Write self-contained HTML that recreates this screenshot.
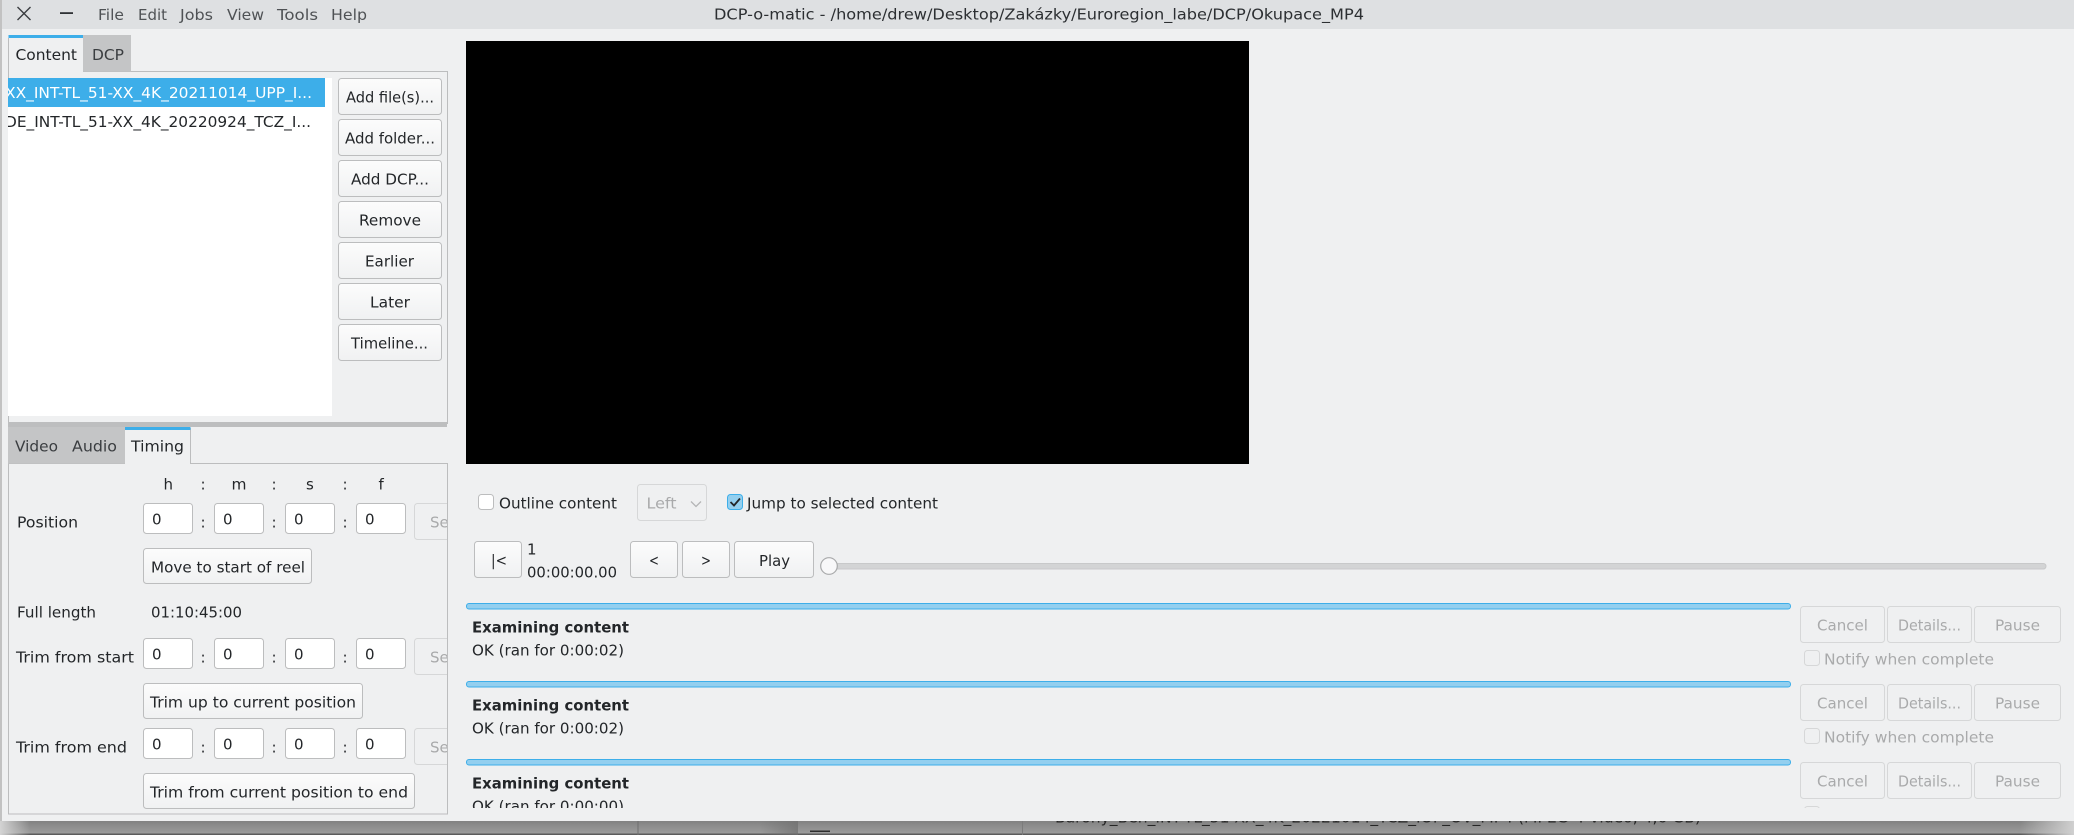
<!DOCTYPE html>
<html><head><meta charset="utf-8"><title>DCP-o-matic</title>
<style>
html,body{margin:0;padding:0;background:#999;width:2074px;height:835px;overflow:hidden}
svg{display:block}
text{font-family:"DejaVu Sans",sans-serif;font-size:15px;fill:#232629}
.d{fill:#a9aaab}
.m{fill:#4f5255}
.b{font-weight:bold;font-size:14.8px}
.btn{fill:url(#g);stroke:#bcbdbe}
.dis{fill:#eff0f1;stroke:#d6d7d8}
.in{fill:#fff;stroke:#bcbdbe}
.bar{fill:#93cfef;stroke:#3daee9;stroke-width:1}
</style></head><body>
<svg xmlns="http://www.w3.org/2000/svg" width="2074" height="835" viewBox="0 0 2074 835">
<defs>
<linearGradient id="g" x1="0" y1="0" x2="0" y2="1"><stop offset="0" stop-color="#fcfcfc"/><stop offset="1" stop-color="#f0f1f2"/></linearGradient>
<linearGradient id="sh" x1="0" y1="0" x2="0" y2="1"><stop offset="0" stop-color="#828282"/><stop offset="1" stop-color="#9d9d9d"/></linearGradient>
<linearGradient id="l" x1="0" y1="0" x2="1" y2="0"><stop offset="0" stop-color="#d4d4d4"/><stop offset="1" stop-color="#d4d4d4" stop-opacity="0"/></linearGradient>
<linearGradient id="r" x1="0" y1="0" x2="1" y2="0"><stop offset="0" stop-color="#d0d0d0" stop-opacity="0"/><stop offset="1" stop-color="#d0d0d0"/></linearGradient>
<linearGradient id="k" x1="0" y1="0" x2="1" y2="0"><stop offset="0" stop-color="#6e6e6e" stop-opacity="0"/><stop offset="1" stop-color="#6e6e6e"/></linearGradient>
<clipPath id="cl"><rect x="8" y="78" width="317" height="60"/></clipPath>
<clipPath id="cb"><rect x="460" y="0" width="1620" height="808"/></clipPath>
<clipPath id="cb2"><rect x="0" y="821" width="2074" height="14"/></clipPath>
<clipPath id="cs"><rect x="0" y="0" width="447" height="835"/></clipPath>
</defs>

<!-- background behind window -->
<rect x="0" y="0" width="2074" height="835" fill="#c2c2c2"/>
<rect x="0" y="821" width="2074" height="12.5" fill="url(#sh)"/>
<rect x="0" y="833.5" width="2074" height="1.5" fill="#5c5c5c"/>
<rect x="0" y="821" width="30" height="14" fill="url(#l)"/>
<rect x="2020" y="821" width="54" height="14" fill="url(#r)"/>
<rect x="760" y="821" width="38" height="14" fill="url(#k)" opacity=".7"/>
<rect x="637.5" y="821" width="1" height="14" fill="#6f6f6f"/>
<rect x="1022" y="821" width="1" height="14" fill="#7c7c7c"/>
<rect x="810" y="830.5" width="20" height="1.5" fill="#2e2e2e"/>
<g clip-path="url(#cb2)"><text x="1055" y="822.5" textLength="646" lengthAdjust="spacingAndGlyphs" style="fill:#262626">Barony_Ben_INT-TL_51-XX_4K_20221014_TCZ_IOP_OV_MP4 (MPEG-4 Video, 4,6 GB)</text></g>

<!-- window -->
<rect x="2" y="0" width="2072" height="821" fill="#eff0f1"/>
<rect x="2" y="0" width="2072" height="29" fill="#dee0e2"/>

<!-- titlebar icons -->
<path d="M17.5 7L30.5 20M30.5 7L17.5 20" stroke="#3a3d40" stroke-width="1.4" fill="none"/>
<rect x="60" y="12.2" width="13" height="1.8" fill="#2f3235"/>

<!-- menu -->
<text class="m" x="98" y="20" textLength="26" lengthAdjust="spacingAndGlyphs">File</text>
<text class="m" x="138" y="20" textLength="29" lengthAdjust="spacingAndGlyphs">Edit</text>
<text class="m" x="180" y="20" textLength="33" lengthAdjust="spacingAndGlyphs">Jobs</text>
<text class="m" x="227" y="20" textLength="37" lengthAdjust="spacingAndGlyphs">View</text>
<text class="m" x="277" y="20" textLength="41" lengthAdjust="spacingAndGlyphs">Tools</text>
<text class="m" x="331" y="20" textLength="36" lengthAdjust="spacingAndGlyphs">Help</text>
<text x="714" y="19.5" textLength="650" lengthAdjust="spacingAndGlyphs" style="fill:#2c2f32">DCP-o-matic - /home/drew/Desktop/Zakázky/Euroregion_labe/DCP/Okupace_MP4</text>

<!-- top notebook -->
<rect x="8.5" y="71.5" width="439" height="352" fill="none" stroke="#bcbdbe"/>
<rect x="83" y="35" width="48" height="36.5" fill="#c4c5c6"/>
<rect x="8.5" y="35.5" width="74.5" height="38" fill="#eff0f1"/>
<rect x="8.5" y="35" width="74.5" height="3" fill="#3daee9"/>
<rect x="8" y="38" width="1" height="36" fill="#bcbdbe"/>
<text x="15.5" y="60" textLength="61.5" lengthAdjust="spacingAndGlyphs">Content</text>
<text x="92" y="60" textLength="32" lengthAdjust="spacingAndGlyphs" style="fill:#3a3d40">DCP</text>

<!-- list -->
<rect x="8" y="78" width="324" height="338" fill="#fff"/>
<rect x="8" y="78" width="317" height="29" fill="#3daee9"/>
<g clip-path="url(#cl)">
<text x="5" y="98" textLength="307" lengthAdjust="spacingAndGlyphs" style="fill:#fff">XX_INT-TL_51-XX_4K_20211014_UPP_I...</text>
<text x="5" y="127" textLength="306" lengthAdjust="spacingAndGlyphs">DE_INT-TL_51-XX_4K_20220924_TCZ_I...</text>
</g>

<!-- side buttons -->
<rect class="btn" x="338.5" y="78.5" width="103" height="36" rx="3"/>
<rect class="btn" x="338.5" y="119.5" width="103" height="36" rx="3"/>
<rect class="btn" x="338.5" y="160.5" width="103" height="36" rx="3"/>
<rect class="btn" x="338.5" y="201.5" width="103" height="36" rx="3"/>
<rect class="btn" x="338.5" y="242.5" width="103" height="36" rx="3"/>
<rect class="btn" x="338.5" y="283.5" width="103" height="36" rx="3"/>
<rect class="btn" x="338.5" y="324.5" width="103" height="36" rx="3"/>
<text x="346" y="102.5" textLength="88" lengthAdjust="spacingAndGlyphs">Add file(s)...</text>
<text x="345" y="143.5" textLength="90" lengthAdjust="spacingAndGlyphs">Add folder...</text>
<text x="351" y="184.5" textLength="78" lengthAdjust="spacingAndGlyphs">Add DCP...</text>
<text x="359" y="225.5" textLength="62" lengthAdjust="spacingAndGlyphs">Remove</text>
<text x="365" y="266.5" textLength="49" lengthAdjust="spacingAndGlyphs">Earlier</text>
<text x="370" y="307.5" textLength="40" lengthAdjust="spacingAndGlyphs">Later</text>
<text x="351" y="348.5" textLength="77" lengthAdjust="spacingAndGlyphs">Timeline...</text>

<!-- sash -->
<rect x="8" y="422" width="439" height="5" fill="#bdbebf"/>

<!-- lower notebook -->
<rect x="8.5" y="463.5" width="439" height="350.5" fill="none" stroke="#bcbdbe"/>
<rect x="8" y="427" width="117" height="36.5" fill="#c4c5c6"/>
<rect x="125" y="427" width="65" height="38" fill="#eff0f1"/>
<rect x="190" y="428" width="1" height="36" fill="#bcbdbe"/>
<rect x="125" y="427" width="65.5" height="3" fill="#3daee9"/>
<text x="15" y="451.5" textLength="43" lengthAdjust="spacingAndGlyphs" style="fill:#3a3d40">Video</text>
<text x="72" y="451.5" textLength="45" lengthAdjust="spacingAndGlyphs" style="fill:#3a3d40">Audio</text>
<text x="131" y="451.5" textLength="53" lengthAdjust="spacingAndGlyphs">Timing</text>

<text x="163.5" y="489.5">h</text><text x="200.5" y="489.5">:</text>
<text x="231.5" y="489.5" textLength="15" lengthAdjust="spacingAndGlyphs">m</text><text x="271.5" y="489.5">:</text>
<text x="306" y="489.5">s</text><text x="342.5" y="489.5">:</text>
<text x="378.5" y="489.5">f</text>

<g clip-path="url(#cs)">
<text x="17" y="527.5" textLength="61" lengthAdjust="spacingAndGlyphs">Position</text>
<rect class="in" x="143.5" y="503.5" width="49" height="30" rx="3"/>
<rect class="in" x="214.5" y="503.5" width="49" height="30" rx="3"/>
<rect class="in" x="285.5" y="503.5" width="49" height="30" rx="3"/>
<rect class="in" x="356.5" y="503.5" width="49" height="30" rx="3"/>
<text x="152" y="524.5">0</text><text x="223" y="524.5">0</text><text x="294" y="524.5">0</text><text x="365" y="524.5">0</text>
<text x="200.5" y="527.5">:</text><text x="271.5" y="527.5">:</text><text x="342.5" y="527.5">:</text>
<rect class="dis" x="414.5" y="503.5" width="60" height="36" rx="3"/>
<text class="d" x="430" y="527.5">Se</text>
<rect class="btn" x="143.5" y="548.5" width="168" height="35" rx="3"/>
<text x="151" y="572.5" textLength="154" lengthAdjust="spacingAndGlyphs">Move to start of reel</text>

<text x="17" y="617.5" textLength="79" lengthAdjust="spacingAndGlyphs">Full length</text>
<text x="151" y="617.5" textLength="91" lengthAdjust="spacingAndGlyphs">01:10:45:00</text>

<text x="16" y="662.5" textLength="118" lengthAdjust="spacingAndGlyphs">Trim from start</text>
<rect class="in" x="143.5" y="638.5" width="49" height="30" rx="3"/>
<rect class="in" x="214.5" y="638.5" width="49" height="30" rx="3"/>
<rect class="in" x="285.5" y="638.5" width="49" height="30" rx="3"/>
<rect class="in" x="356.5" y="638.5" width="49" height="30" rx="3"/>
<text x="152" y="659.5">0</text><text x="223" y="659.5">0</text><text x="294" y="659.5">0</text><text x="365" y="659.5">0</text>
<text x="200.5" y="662.5">:</text><text x="271.5" y="662.5">:</text><text x="342.5" y="662.5">:</text>
<rect class="dis" x="414.5" y="638.5" width="60" height="36" rx="3"/>
<text class="d" x="430" y="662.5">Se</text>
<rect class="btn" x="143.5" y="683.5" width="219" height="35" rx="3"/>
<text x="150" y="707.5" textLength="206" lengthAdjust="spacingAndGlyphs">Trim up to current position</text>

<text x="16" y="752.5" textLength="111" lengthAdjust="spacingAndGlyphs">Trim from end</text>
<rect class="in" x="143.5" y="728.5" width="49" height="30" rx="3"/>
<rect class="in" x="214.5" y="728.5" width="49" height="30" rx="3"/>
<rect class="in" x="285.5" y="728.5" width="49" height="30" rx="3"/>
<rect class="in" x="356.5" y="728.5" width="49" height="30" rx="3"/>
<text x="152" y="749.5">0</text><text x="223" y="749.5">0</text><text x="294" y="749.5">0</text><text x="365" y="749.5">0</text>
<text x="200.5" y="752.5">:</text><text x="271.5" y="752.5">:</text><text x="342.5" y="752.5">:</text>
<rect class="dis" x="414.5" y="728.5" width="60" height="36" rx="3"/>
<text class="d" x="430" y="752.5">Se</text>
<rect class="btn" x="143.5" y="773.5" width="271" height="35" rx="3"/>
<text x="150" y="797.5" textLength="258" lengthAdjust="spacingAndGlyphs">Trim from current position to end</text>
</g>

<!-- viewer -->
<rect x="466" y="41" width="783" height="423" fill="#000"/>

<!-- controls row 1 -->
<rect x="478.5" y="494.5" width="15" height="15" rx="3" fill="#fff" stroke="#bcbdbe"/>
<text x="499" y="508.5" textLength="118" lengthAdjust="spacingAndGlyphs">Outline content</text>
<rect class="dis" x="637.5" y="484.5" width="69" height="36" rx="3"/>
<text class="d" x="646.5" y="508.5" textLength="30" lengthAdjust="spacingAndGlyphs">Left</text>
<path d="M691 501.5L696 506.5L701 501.5" fill="none" stroke="#b4b5b6" stroke-width="1.3"/>
<rect x="727.5" y="494.5" width="15" height="15" rx="3" fill="#93cfef" stroke="#3daee9"/>
<path d="M730.5 502L734 505.5L740 498.5" fill="none" stroke="#232629" stroke-width="1.8"/>
<text x="747" y="508.5" textLength="191" lengthAdjust="spacingAndGlyphs">Jump to selected content</text>

<!-- controls row 2 -->
<rect class="btn" x="474.5" y="541.5" width="47" height="36" rx="3"/>
<text x="491" y="565.5" textLength="16" lengthAdjust="spacingAndGlyphs">|&lt;</text>
<text x="527" y="554.5">1</text>
<text x="527" y="577.5" textLength="90" lengthAdjust="spacingAndGlyphs">00:00:00.00</text>
<rect class="btn" x="630.5" y="541.5" width="47" height="36" rx="3"/>
<rect class="btn" x="682.5" y="541.5" width="47" height="36" rx="3"/>
<rect class="btn" x="734.5" y="541.5" width="79" height="36" rx="3"/>
<text x="649" y="565.5" textLength="10" lengthAdjust="spacingAndGlyphs">&lt;</text>
<text x="701" y="565.5" textLength="10" lengthAdjust="spacingAndGlyphs">&gt;</text>
<text x="759" y="566" textLength="31" lengthAdjust="spacingAndGlyphs">Play</text>
<rect x="830" y="563.5" width="1216" height="5.5" rx="2.7" fill="#d3d4d5" stroke="#c8c9ca"/>
<circle cx="829" cy="566" r="8.3" fill="#f8f8f9" stroke="#a9aaab" stroke-width="1.2"/>

<!-- jobs -->
<rect class="bar" x="466.5" y="603.5" width="1324" height="5.5" rx="2.5"/>
<rect class="bar" x="466.5" y="681.5" width="1324" height="5.5" rx="2.5"/>
<rect class="bar" x="466.5" y="759.5" width="1324" height="5.5" rx="2.5"/>
<g clip-path="url(#cb)">
<text class="b" x="472" y="632.5" textLength="157" lengthAdjust="spacingAndGlyphs">Examining content</text>
<text x="472" y="655.5" textLength="152" lengthAdjust="spacingAndGlyphs">OK (ran for 0:00:02)</text>
<text class="b" x="472" y="710.5" textLength="157" lengthAdjust="spacingAndGlyphs">Examining content</text>
<text x="472" y="733.5" textLength="152" lengthAdjust="spacingAndGlyphs">OK (ran for 0:00:02)</text>
<text class="b" x="472" y="788.5" textLength="157" lengthAdjust="spacingAndGlyphs">Examining content</text>
<text x="472" y="811.5" textLength="152" lengthAdjust="spacingAndGlyphs">OK (ran for 0:00:00)</text>

<rect class="dis" x="1800.5" y="606.5" width="84" height="36" rx="3"/>
<rect class="dis" x="1887.5" y="606.5" width="84" height="36" rx="3"/>
<rect class="dis" x="1974.5" y="606.5" width="86" height="36" rx="3"/>
<text class="d" x="1817" y="630.5" textLength="51" lengthAdjust="spacingAndGlyphs">Cancel</text>
<text class="d" x="1898" y="630.5" textLength="63" lengthAdjust="spacingAndGlyphs">Details...</text>
<text class="d" x="1995" y="630.5" textLength="45" lengthAdjust="spacingAndGlyphs">Pause</text>
<rect x="1804.5" y="650.5" width="15" height="15" rx="3" fill="#eff0f1" stroke="#d6d7d8"/>
<text class="d" x="1824" y="664.5" textLength="170" lengthAdjust="spacingAndGlyphs">Notify when complete</text>

<rect class="dis" x="1800.5" y="684.5" width="84" height="36" rx="3"/>
<rect class="dis" x="1887.5" y="684.5" width="84" height="36" rx="3"/>
<rect class="dis" x="1974.5" y="684.5" width="86" height="36" rx="3"/>
<text class="d" x="1817" y="708.5" textLength="51" lengthAdjust="spacingAndGlyphs">Cancel</text>
<text class="d" x="1898" y="708.5" textLength="63" lengthAdjust="spacingAndGlyphs">Details...</text>
<text class="d" x="1995" y="708.5" textLength="45" lengthAdjust="spacingAndGlyphs">Pause</text>
<rect x="1804.5" y="728.5" width="15" height="15" rx="3" fill="#eff0f1" stroke="#d6d7d8"/>
<text class="d" x="1824" y="742.5" textLength="170" lengthAdjust="spacingAndGlyphs">Notify when complete</text>

<rect class="dis" x="1800.5" y="762.5" width="84" height="36" rx="3"/>
<rect class="dis" x="1887.5" y="762.5" width="84" height="36" rx="3"/>
<rect class="dis" x="1974.5" y="762.5" width="86" height="36" rx="3"/>
<text class="d" x="1817" y="786.5" textLength="51" lengthAdjust="spacingAndGlyphs">Cancel</text>
<text class="d" x="1898" y="786.5" textLength="63" lengthAdjust="spacingAndGlyphs">Details...</text>
<text class="d" x="1995" y="786.5" textLength="45" lengthAdjust="spacingAndGlyphs">Pause</text>
<rect x="1804.5" y="806.5" width="15" height="15" rx="3" fill="#eff0f1" stroke="#d6d7d8"/>
</g>
</svg>
</body></html>
